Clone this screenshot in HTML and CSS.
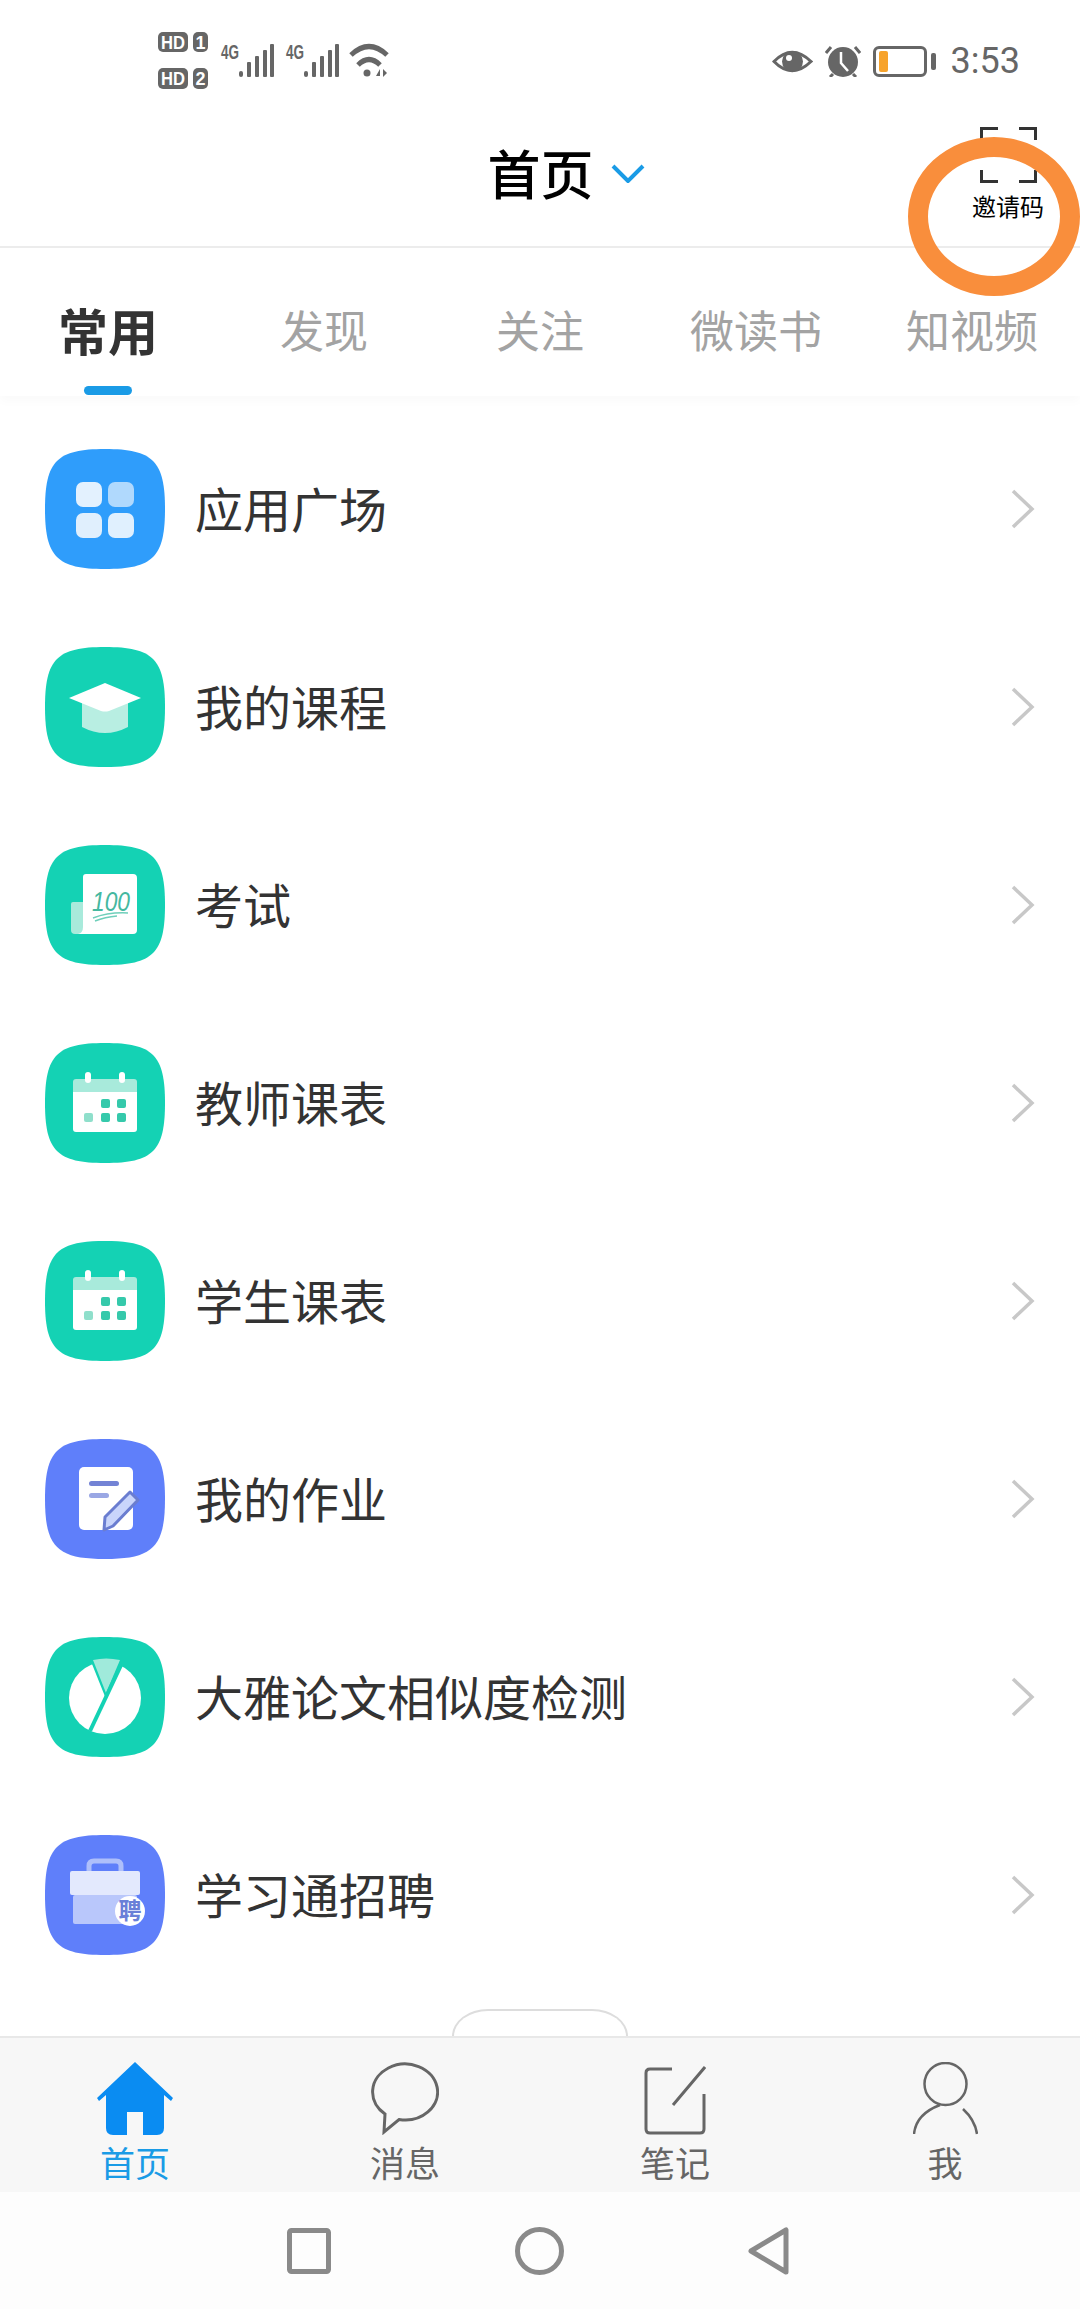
FILE: index.html
```html
<!DOCTYPE html>
<html lang="zh-CN">
<head>
    <meta charset="UTF-8">
    <meta name="viewport" content="width=device-width, initial-scale=1.0">
    <title>首页</title>
    <link rel="stylesheet" href="styles.css">
</head>
<body>
<div class="page">

    <!-- Status bar -->
    <div class="status">
        <svg class="status-left" width="232" height="58" viewBox="0 0 232 58">
            <rect class="pill" x="1" y="0" width="30" height="20" rx="5"/>
            <text class="pill-text" x="16" y="16.5" textLength="24" lengthAdjust="spacingAndGlyphs">HD</text>
            <rect class="pill" x="36" y="0" width="15" height="20" rx="5"/>
            <text class="pill-text" x="43.5" y="16.5">1</text>
            <rect class="pill" x="1" y="36" width="30" height="21" rx="5"/>
            <text class="pill-text" x="16" y="53" textLength="24" lengthAdjust="spacingAndGlyphs">HD</text>
            <rect class="pill" x="36" y="36" width="15" height="21" rx="5"/>
            <text class="pill-text" x="43.5" y="53">2</text>

            <text class="net-text" x="64" y="27" textLength="18" lengthAdjust="spacingAndGlyphs">4G</text>
            <g class="pill">
                <rect x="82" y="39" width="4" height="6" rx="2"/>
                <rect x="90" y="30" width="4" height="15" rx="1"/>
                <rect x="98" y="24" width="4" height="21" rx="1"/>
                <rect x="106" y="18" width="4" height="27" rx="1"/>
                <rect x="113" y="12" width="4" height="33" rx="1"/>
            </g>
            <text class="net-text" x="129" y="27" textLength="18" lengthAdjust="spacingAndGlyphs">4G</text>
            <g class="pill">
                <rect x="147" y="39" width="4" height="6" rx="2"/>
                <rect x="155" y="30" width="4" height="15" rx="1"/>
                <rect x="163" y="24" width="4" height="21" rx="1"/>
                <rect x="171" y="18" width="4" height="27" rx="1"/>
                <rect x="178" y="12" width="4" height="33" rx="1"/>
            </g>

            <path class="wifi" d="M194 23 Q212 6 230 23"/>
            <path class="wifi" d="M201 33 Q212 22 223 33"/>
            <circle class="pill" cx="210" cy="41" r="3.5"/>
            <path class="pill" d="M219 44 L223 37 V44 Z M226 37 L230 41 L226 45 Z"/>
        </svg>
        <div class="status-right">
            <svg width="41" height="27" viewBox="0 0 41 27">
                <path class="eye" d="M2 13.5 Q20 -5 39 13.5 Q20 32 2 13.5 Z"/>
                <circle class="pill" cx="20.5" cy="13.5" r="10.5"/>
                <circle class="hole" cx="17" cy="10" r="3"/>
            </svg>
            <svg width="36" height="32" viewBox="0 0 36 32">
                <circle class="pill" cx="18" cy="17" r="15"/>
                <path class="wifi thin" d="M1 8 L6 2 M35 8 L30 2 M8 29 L5 32 M28 29 L31 32"/>
                <path class="clock-hand" d="M16 7 V18 L23 26"/>
            </svg>
            <div class="battery">
                <div class="battery-body"><div class="battery-fill"></div></div>
                <div class="battery-nub"></div>
            </div>
            <span class="time">3:53</span>
        </div>
    </div>

    <!-- Title row -->
    <header class="titlebar">
        <div></div>
        <h1 class="title">首页</h1>
        <div class="title-right">
            <svg class="title-arrow" width="34" height="19" viewBox="0 0 34 19">
                <path d="M2 2 L17 17 L32 2"/>
            </svg>
            <div class="scan">
                <svg width="57" height="56" viewBox="0 0 57 56">
                    <path d="M1.5 13 V1.5 H18 M39 1.5 H55.5 V13 M1.5 43 V54.5 H18 M39 54.5 H55.5 V43 M4 28 H53"/>
                </svg>
                <span class="scan-label">邀请码</span>
            </div>
        </div>
    </header>

    <!-- Marker drawn on top of the screenshot -->
    <div class="ring"></div>

    <!-- Tabs -->
    <nav class="tabs">
        <div class="tab active"><span class="tab-label">常用</span><i class="tab-line"></i></div>
        <div class="tab"><span class="tab-label">发现</span></div>
        <div class="tab"><span class="tab-label">关注</span></div>
        <div class="tab"><span class="tab-label">微读书</span></div>
        <div class="tab"><span class="tab-label">知视频</span></div>
    </nav>

    <!-- Menu list -->
    <ul class="menu">
        <li class="row">
            <svg class="app-icon" viewBox="0 0 120 120">
                <path class="blue" d="M0 60 C0 12 12 0 60 0 C108 0 120 12 120 60 C120 108 108 120 60 120 C12 120 0 108 0 60 Z"/>
                <rect x="31" y="33" width="26" height="25" rx="7" fill="#e3f1fe"/>
                <rect x="63" y="33" width="26" height="25" rx="7" fill="#b0d9fd"/>
                <rect x="31" y="64" width="26" height="25" rx="7" fill="#e0effd"/>
                <rect x="63" y="64" width="26" height="25" rx="7" fill="#e0f0fe"/>
            </svg>
            <span class="row-label">应用广场</span>
            <svg class="chevron" width="24" height="40" viewBox="0 0 24 40"><path d="M2 2 L21 20 L2 38"/></svg>
        </li>
        <li class="row">
            <svg class="app-icon" viewBox="0 0 120 120">
                <path class="teal" d="M0 60 C0 12 12 0 60 0 C108 0 120 12 120 60 C120 108 108 120 60 120 C12 120 0 108 0 60 Z"/>
                <path d="M37 52 H83 V80 Q60 92 37 80 Z" fill="#b8eee2"/>
                <path d="M60 36 L96 51 L64 64 Q60 65 56 64 L24 51 Z" fill="#fff"/>
            </svg>
            <span class="row-label">我的课程</span>
            <svg class="chevron" width="24" height="40" viewBox="0 0 24 40"><path d="M2 2 L21 20 L2 38"/></svg>
        </li>
        <li class="row">
            <svg class="app-icon" viewBox="0 0 120 120">
                <path class="teal" d="M0 60 C0 12 12 0 60 0 C108 0 120 12 120 60 C120 108 108 120 60 120 C12 120 0 108 0 60 Z"/>
                <path d="M28 57 H40 V89 H30 Q26 89 26 85 V59 Q26 57 28 57 Z" fill="#a8eadb"/>
                <path d="M41 29 H88 Q92 29 92 33 V85 Q92 89 88 89 H33 Q38 88 38 82 V32 Q38 29 41 29 Z" fill="#fff"/>
                <text class="score" x="47" y="66" textLength="38" lengthAdjust="spacingAndGlyphs">100</text>
                <path class="score-line" d="M48 73 Q64 67 83 68 M50 76 Q60 72 72 71"/>
            </svg>
            <span class="row-label">考试</span>
            <svg class="chevron" width="24" height="40" viewBox="0 0 24 40"><path d="M2 2 L21 20 L2 38"/></svg>
        </li>
        <li class="row">
            <svg class="app-icon" viewBox="0 0 120 120">
                <path class="teal" d="M0 60 C0 12 12 0 60 0 C108 0 120 12 120 60 C120 108 108 120 60 120 C12 120 0 108 0 60 Z"/>
                <path d="M31 36 H89 Q92 36 92 39 V49 H28 V39 Q28 36 31 36 Z" fill="#a8eadb"/>
                <path d="M28 49 H92 V86 Q92 89 89 89 H31 Q28 89 28 86 Z" fill="#fff"/>
                <rect x="40" y="29" width="6" height="11" rx="3" fill="#fff"/>
                <rect x="74" y="29" width="6" height="11" rx="3" fill="#fff"/>
                <rect x="56" y="56" width="9" height="9" rx="2" fill="#35c9ab"/>
                <rect x="72" y="56" width="9" height="9" rx="2" fill="#35c9ab"/>
                <rect x="39" y="70" width="9" height="9" rx="2" fill="#8fdfcb"/>
                <rect x="56" y="70" width="9" height="9" rx="2" fill="#35c9ab"/>
                <rect x="72" y="70" width="9" height="9" rx="2" fill="#35c9ab"/>
            </svg>
            <span class="row-label">教师课表</span>
            <svg class="chevron" width="24" height="40" viewBox="0 0 24 40"><path d="M2 2 L21 20 L2 38"/></svg>
        </li>
        <li class="row">
            <svg class="app-icon" viewBox="0 0 120 120">
                <path class="teal" d="M0 60 C0 12 12 0 60 0 C108 0 120 12 120 60 C120 108 108 120 60 120 C12 120 0 108 0 60 Z"/>
                <path d="M31 36 H89 Q92 36 92 39 V49 H28 V39 Q28 36 31 36 Z" fill="#a8eadb"/>
                <path d="M28 49 H92 V86 Q92 89 89 89 H31 Q28 89 28 86 Z" fill="#fff"/>
                <rect x="40" y="29" width="6" height="11" rx="3" fill="#fff"/>
                <rect x="74" y="29" width="6" height="11" rx="3" fill="#fff"/>
                <rect x="56" y="56" width="9" height="9" rx="2" fill="#35c9ab"/>
                <rect x="72" y="56" width="9" height="9" rx="2" fill="#35c9ab"/>
                <rect x="39" y="70" width="9" height="9" rx="2" fill="#8fdfcb"/>
                <rect x="56" y="70" width="9" height="9" rx="2" fill="#35c9ab"/>
                <rect x="72" y="70" width="9" height="9" rx="2" fill="#35c9ab"/>
            </svg>
            <span class="row-label">学生课表</span>
            <svg class="chevron" width="24" height="40" viewBox="0 0 24 40"><path d="M2 2 L21 20 L2 38"/></svg>
        </li>
        <li class="row">
            <svg class="app-icon" viewBox="0 0 120 120">
                <path class="indigo" d="M0 60 C0 12 12 0 60 0 C108 0 120 12 120 60 C120 108 108 120 60 120 C12 120 0 108 0 60 Z"/>
                <rect x="34" y="28" width="54" height="63" rx="5" fill="#fff"/>
                <rect x="44" y="42" width="30" height="5" rx="2.5" fill="#7383d5"/>
                <rect x="44" y="54" width="20" height="5" rx="2.5" fill="#9aa7e4"/>
                <path d="M60 78 L85 53 L93 61 L68 87 L59 91 Z" fill="#c9d5fb" stroke="#6a7dd0" stroke-width="3" stroke-linejoin="round"/>
            </svg>
            <span class="row-label">我的作业</span>
            <svg class="chevron" width="24" height="40" viewBox="0 0 24 40"><path d="M2 2 L21 20 L2 38"/></svg>
        </li>
        <li class="row">
            <svg class="app-icon" viewBox="0 0 120 120">
                <path class="teal" d="M0 60 C0 12 12 0 60 0 C108 0 120 12 120 60 C120 108 108 120 60 120 C12 120 0 108 0 60 Z"/>
                <circle cx="60" cy="61" r="36" fill="#fff"/>
                <path d="M45 22 L80 22 L61 62 Z" fill="#14d2b4"/>
                <path d="M48 23 Q61 20 75 23 L61 56 Z" fill="#a0eadb"/>
                <path class="pie-cut" d="M78 24 L45 94"/>
            </svg>
            <span class="row-label">大雅论文相似度检测</span>
            <svg class="chevron" width="24" height="40" viewBox="0 0 24 40"><path d="M2 2 L21 20 L2 38"/></svg>
        </li>
        <li class="row">
            <svg class="app-icon" viewBox="0 0 120 120">
                <path class="indigo" d="M0 60 C0 12 12 0 60 0 C108 0 120 12 120 60 C120 108 108 120 60 120 C12 120 0 108 0 60 Z"/>
                <path d="M44 37 V31 Q44 26 49 26 H71 Q76 26 76 31 V37" fill="none" stroke="#aebffa" stroke-width="5"/>
                <rect x="25" y="36" width="70" height="24" rx="2" fill="#e3e9fd"/>
                <rect x="28" y="60" width="64" height="29" rx="2" fill="#b9c7fb"/>
                <circle cx="85" cy="76" r="15" fill="#fff"/>
                <text class="badge-text" x="85" y="84">聘</text>
            </svg>
            <span class="row-label">学习通招聘</span>
            <svg class="chevron" width="24" height="40" viewBox="0 0 24 40"><path d="M2 2 L21 20 L2 38"/></svg>
        </li>
    </ul>

    <!-- Expand handle, mostly hidden behind the bottom bar -->
    <div class="handle"></div>

    <!-- Bottom navigation -->
    <footer class="bottom">
        <div class="bottom-item active">
            <svg class="bottom-icon" width="76" height="73" viewBox="0 0 76 73">
                <path class="home" d="M38 0 L76 36 L74 39 L67 33 V66 Q67 73 60 73 H46 V50 H30 V73 H16 Q9 73 9 66 V33 L2 39 L0 36 Z"/>
            </svg>
            <span class="bottom-label">首页</span>
        </div>
        <div class="bottom-item">
            <svg class="bottom-icon" width="68" height="73" viewBox="0 0 68 73">
                <path d="M14 52 A32.5 28 0 1 1 28 57.5 L13 70 Z"/>
            </svg>
            <span class="bottom-label">消息</span>
        </div>
        <div class="bottom-item">
            <svg class="bottom-icon" width="62" height="73" viewBox="0 0 62 73">
                <path d="M28 7 H6 Q2 7 2 11 V67 Q2 71 6 71 H56 Q60 71 60 67 V32 M61 5 L29 43"/>
            </svg>
            <span class="bottom-label">笔记</span>
        </div>
        <div class="bottom-item">
            <svg class="bottom-icon thin" width="65" height="73" viewBox="0 0 65 73">
                <ellipse cx="32.5" cy="22" rx="21" ry="21"/>
                <path d="M1 72 Q3 52 27 43 M50 47 Q62 58 64 72"/>
            </svg>
            <span class="bottom-label">我</span>
        </div>
    </footer>

    <!-- System buttons -->
    <div class="sysnav">
        <svg width="44" height="46" viewBox="0 0 44 46"><rect x="2.5" y="2.5" width="39" height="41" rx="2"/></svg>
        <svg width="49" height="48" viewBox="0 0 49 48"><ellipse cx="24.5" cy="24" rx="22" ry="21.5"/></svg>
        <svg width="41" height="48" viewBox="0 0 41 48"><path d="M38 3 V45 L3 24 Z"/></svg>
    </div>
</div>
</body>
</html>
```

FILE: styles.css
```css
html, body {
    margin: 0;
    padding: 0;
}

body {
    background-color: #fff;
    color: #333;
    font-family: "Noto Sans CJK SC", "Noto Sans", sans-serif;
}

.page {
    position: relative;
    width: 1080px;
    height: 2310px;
    overflow: hidden;
}

/* Status bar */
.status {
    height: 100px;
    box-sizing: border-box;
    padding: 22px 60px 0 157px;
    display: flex;
    align-items: center;
    justify-content: space-between;
}

.status-right {
    display: flex;
    align-items: center;
    gap: 12px;
}

.pill {
    fill: #666;
}

.hole {
    fill: #fff;
}

.pill-text {
    fill: #fff;
    font-family: "Liberation Sans", sans-serif;
    font-size: 18px;
    font-weight: bold;
    text-anchor: middle;
}

.net-text {
    fill: #666;
    font-family: "Liberation Sans", sans-serif;
    font-size: 20px;
    font-weight: bold;
}

.wifi {
    fill: none;
    stroke: #666;
    stroke-width: 5;
}

.wifi.thin {
    stroke-width: 3;
}

.eye {
    fill: none;
    stroke: #666;
    stroke-width: 3;
}

.clock-hand {
    fill: none;
    stroke: #fff;
    stroke-width: 2.5;
}

.battery {
    display: flex;
    align-items: center;
    gap: 4px;
}

.battery-body {
    width: 54px;
    height: 31px;
    box-sizing: border-box;
    border: 3px solid #666;
    border-radius: 6px;
    padding: 2px 3px;
}

.battery-fill {
    width: 9px;
    height: 100%;
    background-color: #f7a32b;
    border-radius: 2px;
}

.battery-nub {
    width: 5px;
    height: 17px;
    background-color: #666;
    border-radius: 2px;
}

.time {
    margin-left: 3px;
    font-family: Roboto, sans-serif;
    font-size: 36px;
    line-height: 40px;
    color: #666;
}

/* Title row */
.titlebar {
    height: 146px;
    padding: 0 36px 0 37px;
    display: grid;
    grid-template-columns: 1fr auto 1fr;
    border-bottom: 2px solid #ececec;
}

.title {
    margin: 0;
    padding-top: 6px;
    font-size: 53px;
    font-weight: 500;
    line-height: 132px;
    color: #000;
}

.title-right {
    display: flex;
    justify-content: space-between;
    margin-left: 17px;
}

.title-arrow {
    align-self: center;
}

.title-arrow path {
    fill: none;
    stroke: #1a9be6;
    stroke-width: 4;
}

.scan {
    margin-top: 27px;
    display: flex;
    flex-direction: column;
    align-items: center;
    gap: 8px;
}

.scan svg path {
    fill: none;
    stroke: #333;
    stroke-width: 3;
}

.scan-label {
    font-size: 24px;
    line-height: 30px;
    color: #000;
}

.ring {
    position: absolute;
    left: 908px;
    top: 137px;
    width: 172px;
    height: 159px;
    box-sizing: border-box;
    border: 20px solid #f98e3c;
    border-radius: 50%;
}

/* Tabs */
.tabs {
    height: 148px;
    display: grid;
    grid-template-columns: repeat(5, 216px);
    box-shadow: 0 5px 10px rgba(0, 0, 0, 0.025);
}

.tab {
    display: flex;
    flex-direction: column;
    align-items: center;
    padding-top: 51px;
}

.tab-label {
    font-size: 44px;
    line-height: 60px;
    color: #a3a3a3;
}

.tab.active .tab-label {
    font-size: 50px;
    font-weight: bold;
    color: #333;
}

.tab-line {
    display: block;
    width: 48px;
    height: 9px;
    margin-top: 27px;
    background-color: #1a9be6;
    border-radius: 5px;
}

/* Menu list */
.menu {
    list-style: none;
    margin: 14px 0 0;
    padding: 0;
}

.row {
    height: 198px;
    box-sizing: border-box;
    padding: 0 45px;
    display: flex;
    align-items: center;
    gap: 30px;
}

.app-icon {
    width: 120px;
    height: 120px;
    flex-shrink: 0;
}

.blue {
    fill: #2f9dfb;
}

.teal {
    fill: #14d2b4;
}

.indigo {
    fill: #5f7ffa;
}

.row-label {
    flex: 1;
    padding-bottom: 5px;
    font-size: 48px;
    line-height: 60px;
    color: #333;
}

.chevron path {
    fill: none;
    stroke: #c8c8c8;
    stroke-width: 3.5;
}

.score {
    fill: #45b8a0;
    font-family: "Liberation Sans", sans-serif;
    font-size: 27px;
    font-style: italic;
}

.score-line {
    fill: none;
    stroke: #6fcfba;
    stroke-width: 1.5;
}

.pie-cut {
    fill: none;
    stroke: #14d2b4;
    stroke-width: 4;
}

.badge-text {
    fill: #6a80d8;
    font-size: 23px;
    font-weight: bold;
    text-anchor: middle;
}

/* Expand handle */
.handle {
    width: 176px;
    height: 27px;
    box-sizing: border-box;
    margin: 15px auto 0;
    border: 2px solid #ddd;
    border-bottom: none;
    border-radius: 36px 36px 0 0 / 27px 27px 0 0;
}

/* Bottom navigation */
.bottom {
    height: 156px;
    box-sizing: border-box;
    padding-top: 24px;
    display: grid;
    grid-template-columns: repeat(4, 270px);
    background-color: #f7f7f7;
    border-top: 2px solid #e8e8e8;
}

.bottom-item {
    display: flex;
    flex-direction: column;
    align-items: center;
    gap: 6px;
}

.bottom-icon path,
.bottom-icon ellipse {
    fill: none;
    stroke: #666;
    stroke-width: 3;
}

.bottom-icon.thin path,
.bottom-icon.thin ellipse {
    stroke-width: 2.5;
}

.bottom-icon .home {
    fill: #0a8cf2;
    stroke: none;
}

.bottom-label {
    font-size: 35px;
    line-height: 42px;
    color: #666;
}

.bottom-item.active .bottom-label {
    color: #1a9be6;
}

/* System buttons */
.sysnav {
    height: 117px;
    padding-right: 5px;
    display: flex;
    align-items: center;
    justify-content: center;
    gap: 184px;
    background-color: #fdfdfd;
}

.sysnav svg rect,
.sysnav svg ellipse,
.sysnav svg path {
    fill: none;
    stroke: #8a8a8a;
    stroke-width: 5;
    stroke-linejoin: round;
}
```
